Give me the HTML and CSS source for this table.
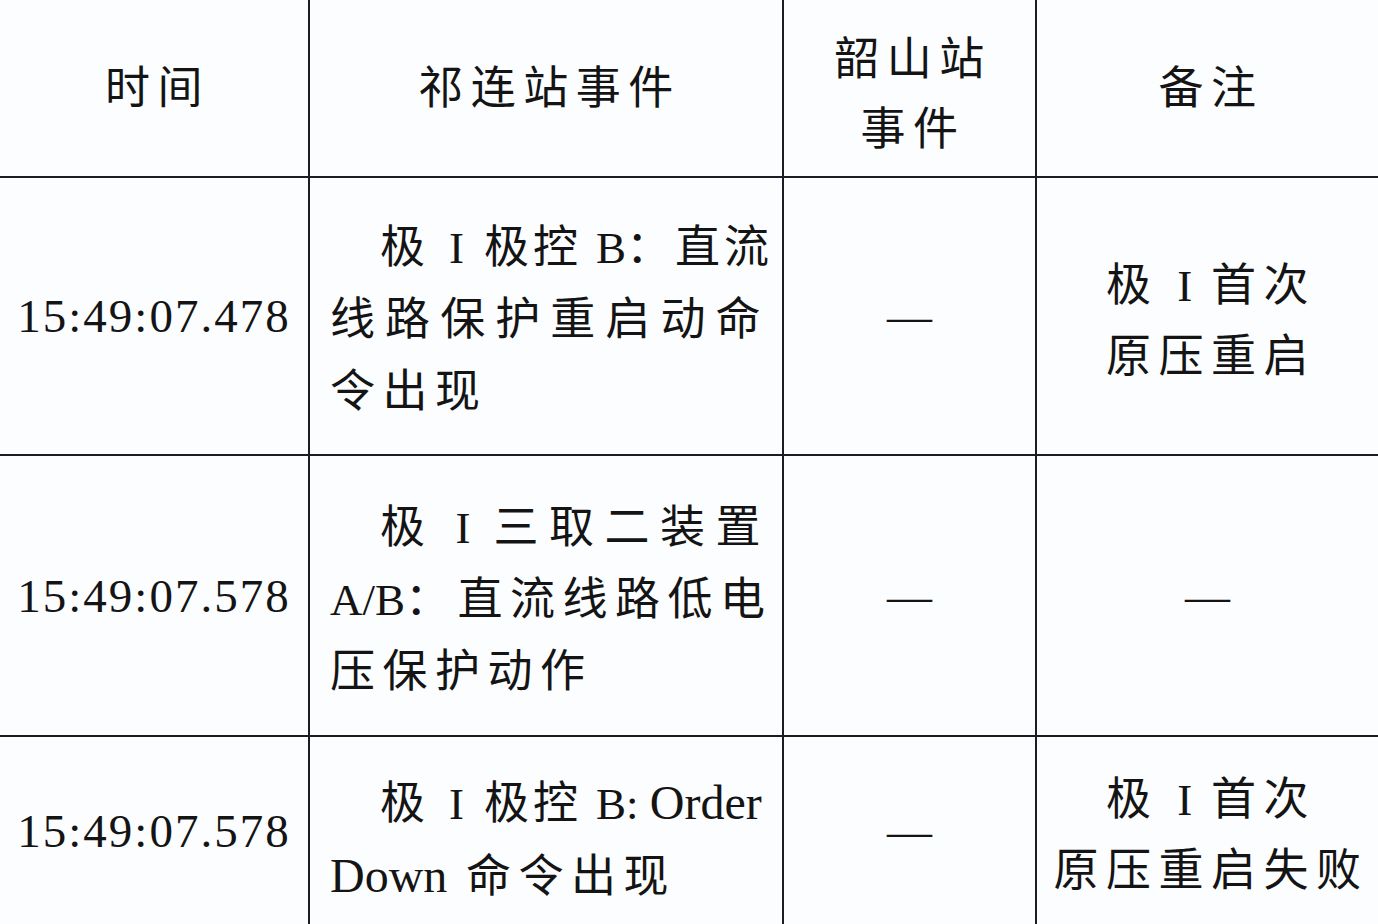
FILE: index.html
```html
<!DOCTYPE html>
<html lang="zh-CN">
<head>
<meta charset="utf-8">
<title>事件记录表</title>
<link rel="stylesheet" href="styles.css">
</head>
<body>
<div class="table">
  <div class="cell head c1"><div class="ln">时间</div></div>
  <div class="cell head c2"><div class="ln">祁连站事件</div></div>
  <div class="cell head c3 two"><div class="ln">韶山站</div><div class="ln">事件</div></div>
  <div class="cell head c4"><div class="ln">备注</div></div>

  <div class="cell r1 c1"><div class="num">15:49:07.478</div></div>
  <div class="cell r1 c2 ev">
    <div class="ln first tight">极<span class="lat rn">I</span>极控<span class="lat bb">B</span>：直流</div>
    <div class="ln j">线路保护重启动命</div>
    <div class="ln">令出现</div>
  </div>
  <div class="cell r1 c3"><div class="dash">—</div></div>
  <div class="cell r1 c4 low"><div class="ln">极 <span class="lat">I</span> 首次</div><div class="ln">原压重启</div></div>

  <div class="cell r2 c1"><div class="num">15:49:07.578</div></div>
  <div class="cell r2 c2 ev">
    <div class="ln j first">极<span class="lat rn">I</span>三取二装置</div>
    <div class="ln j"><span class="lat">A/B</span>：直流线路低电</div>
    <div class="ln">压保护动作</div>
  </div>
  <div class="cell r2 c3"><div class="dash">—</div></div>
  <div class="cell r2 c4"><div class="dash">—</div></div>

  <div class="cell r3 c1 up"><div class="num">15:49:07.578</div></div>
  <div class="cell r3 c2 ev">
    <div class="ln first tight">极<span class="lat rn">I</span>极控<span class="lat bb">B: <span class="big">Order</span></span></div>
    <div class="ln"><span class="lat big">Down</span> 命令出现</div>
  </div>
  <div class="cell r3 c3 up"><div class="dash">—</div></div>
  <div class="cell r3 c4"><div class="ln">极 <span class="lat">I</span> 首次</div><div class="ln">原压重启失败</div></div>
</div>
</body>
</html>
```

FILE: styles.css
```css
html, body {
  margin: 0;
  padding: 0;
  background: #fcfdff;
  overflow: hidden;
}

.table {
  display: grid;
  grid-template-columns: 310px 474px 253px 341px;
  grid-template-rows: 178px 278px 281px 200px;
  font-family: "Liberation Serif", "Noto Sans CJK SC", serif;
  color: #141414;
  font-size: 45px;
}

.cell {
  box-sizing: border-box;
  border-right: 2px solid #1c1c24;
  border-bottom: 2px solid #1c1c24;
  display: flex;
  flex-direction: column;
  justify-content: center;
  align-items: center;
  min-width: 0;
}

.cell.c4 {
  border-right: none;
}

.ln {
  line-height: 71px;
  letter-spacing: 7.5px;
  white-space: nowrap;
}

.lat {
  letter-spacing: 0;
}

.head .ln {
  line-height: 70px;
}

.head.c1, .head.c2, .head.c4 {
  padding-top: 2px;
}

.head.two {
  padding-top: 14px;
}

.c4 .ln, .c3 .ln, .c1 .ln, .c2.head .ln {
  padding-left: 7px;
}

.low {
  padding-top: 12px;
}

.up {
  padding-bottom: 10px;
}

.ev {
  align-items: stretch;
  padding: 8px 14px 0 20px;
}

.ev .ln {
  line-height: 72px;
  text-align: left;
}

.ev .ln.j {
  text-align: justify;
  text-align-last: justify;
}

.ev .ln.first {
  text-indent: 50px;
}

.ev .ln.tight {
  letter-spacing: 4px;
}

.rn {
  margin: 0 20px;
}

.bb {
  margin-left: 14px;
}

.big {
  font-size: 48px;
}

.num {
  font-size: 47px;
  letter-spacing: 2px;
  line-height: 60px;
}

.dash {
  font-size: 45px;
  line-height: 60px;
}
```
